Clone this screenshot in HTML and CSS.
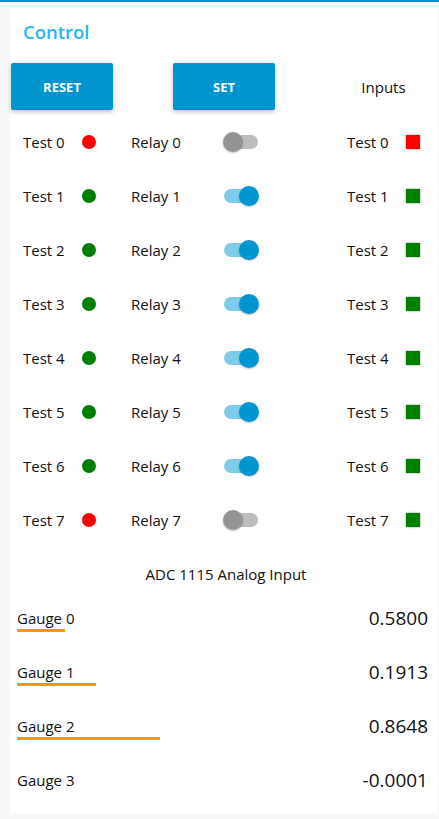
FILE: index.html
```html
<!DOCTYPE html>
<html>
<head>
<meta charset="utf-8">
<link rel="stylesheet" href="styles.css">
</head>
<body>
<div class="topbar"></div>
<div class="card">
  <div class="title">Control</div>
  <div class="btnrow">
    <button class="btn">RESET</button>
    <button class="btn btn-set">SET</button>
    <div class="inputs">Inputs</div>
  </div>
  <div class="grid">
    <span class="lbl">Test 0</span><span class="dot red"></span><span></span><span class="lbl">Relay 0</span><span class="tog"></span><span></span><span class="lbl">Test 0</span><span class="sq red"></span>
    <span class="lbl">Test 1</span><span class="dot green"></span><span></span><span class="lbl">Relay 1</span><span class="tog on"></span><span></span><span class="lbl">Test 1</span><span class="sq green"></span>
    <span class="lbl">Test 2</span><span class="dot green"></span><span></span><span class="lbl">Relay 2</span><span class="tog on"></span><span></span><span class="lbl">Test 2</span><span class="sq green"></span>
    <span class="lbl">Test 3</span><span class="dot green"></span><span></span><span class="lbl">Relay 3</span><span class="tog on"></span><span></span><span class="lbl">Test 3</span><span class="sq green"></span>
    <span class="lbl">Test 4</span><span class="dot green"></span><span></span><span class="lbl">Relay 4</span><span class="tog on"></span><span></span><span class="lbl">Test 4</span><span class="sq green"></span>
    <span class="lbl">Test 5</span><span class="dot green"></span><span></span><span class="lbl">Relay 5</span><span class="tog on"></span><span></span><span class="lbl">Test 5</span><span class="sq green"></span>
    <span class="lbl">Test 6</span><span class="dot green"></span><span></span><span class="lbl">Relay 6</span><span class="tog on"></span><span></span><span class="lbl">Test 6</span><span class="sq green"></span>
    <span class="lbl">Test 7</span><span class="dot red"></span><span></span><span class="lbl">Relay 7</span><span class="tog"></span><span></span><span class="lbl">Test 7</span><span class="sq green"></span>
  </div>
  <div class="adc">ADC 1115 Analog Input</div>
  <div class="gauges">
    <div class="gauge">
      <div class="gname"><span class="glabel">Gauge 0</span><span class="gbar" style="width:48px"></span></div>
      <div class="gval">0.5800</div>
    </div>
    <div class="gauge">
      <div class="gname"><span class="glabel">Gauge 1</span><span class="gbar" style="width:79px"></span></div>
      <div class="gval">0.1913</div>
    </div>
    <div class="gauge">
      <div class="gname"><span class="glabel">Gauge 2</span><span class="gbar" style="width:143px"></span></div>
      <div class="gval">0.8648</div>
    </div>
    <div class="gauge">
      <div class="gname"><span class="glabel">Gauge 3</span><span class="gbar" style="width:0px"></span></div>
      <div class="gval">-0.0001</div>
    </div>
  </div>
</div>
</body>
</html>
```
FILE: styles.css
```css
html, body {
  margin: 0;
  padding: 0;
}
body {
  background: #f8f8f8;
  font-family: "Open Sans", "Noto Sans", sans-serif;
  color: #111;
  width: 439px;
  height: 819px;
  overflow: hidden;
}
.topbar {
  height: 2px;
  background: #0096d3;
}
.card {
  margin: 6px 1px 0 10px;
  background: #fff;
  height: 805px;
  box-sizing: border-box;
}
.title {
  height: 47px;
  display: flex;
  align-items: center;
  padding-left: 13px;
  font-size: 18.5px;
  color: #29b6f6;
  font-weight: 600;
}
.btnrow {
  display: flex;
  align-items: center;
  height: 47px;
  margin-top: 8px;
  padding-left: 1px;
}
.btn {
  width: 102px;
  height: 47px;
  border: none;
  border-radius: 2px;
  background: #0095cf;
  color: #fff;
  font-family: "Open Sans", "Noto Sans", sans-serif;
  font-weight: 700;
  font-size: 13px;
  box-shadow: 0 2px 4px rgba(0,0,0,0.25);
  padding: 0;
}
.btn-set {
  margin-left: 60px;
}
.inputs {
  flex: 1;
  text-align: center;
  font-size: 15px;
  padding-left: 54px;
}
.grid {
  margin-top: 5px;
  padding-left: 13px;
  display: grid;
  grid-template-columns: 59px 14px 35px 91px 38px 87px 59px 14px;
  grid-auto-rows: 54px;
  align-items: center;
}
.lbl {
  font-size: 15px;
  white-space: nowrap;
}
.dot {
  width: 14px;
  height: 14px;
  border-radius: 50%;
}
.dot.red { background: radial-gradient(circle at 50% 45%, #ff0000 60%, #e00000 100%); }
.dot.green { background: radial-gradient(circle at 50% 45%, #008000 60%, #006e00 100%); }
.sq {
  width: 14px;
  height: 14px;
  box-shadow: 0 0 2px rgba(0,0,0,0.45);
}
.sq.red { background: #ff0000; }
.sq.green { background: #008000; }
.tog {
  position: relative;
  width: 34px;
  height: 14px;
  border-radius: 7px;
  background: #bdbdbd;
  margin-left: 2px;
}
.tog::after {
  content: "";
  position: absolute;
  top: -3px;
  left: -1px;
  width: 20px;
  height: 20px;
  border-radius: 50%;
  background: #949494;
  box-shadow: 0 1px 2px rgba(0,0,0,0.25);
}
.tog.on {
  background: #7fcbea;
}
.tog.on::after {
  left: 15px;
  background: #0095cf;
}
.adc {
  height: 54px;
  display: flex;
  align-items: center;
  justify-content: center;
  font-size: 15px;
  padding-left: 4px;
}
.gauges {
  padding: 0 10px 0 7px;
}
.gauge {
  height: 54px;
  display: flex;
  justify-content: space-between;
  align-items: flex-start;
}
.gname {
  display: flex;
  flex-direction: column;
  padding-top: 7px;
}
.glabel {
  font-size: 15px;
  line-height: 20px;
}
.gbar {
  height: 3px;
  background: #ff9800;
  margin-top: 1px;
}
.gval {
  font-size: 19px;
  line-height: 28px;
  padding-top: 3px;
}
```
